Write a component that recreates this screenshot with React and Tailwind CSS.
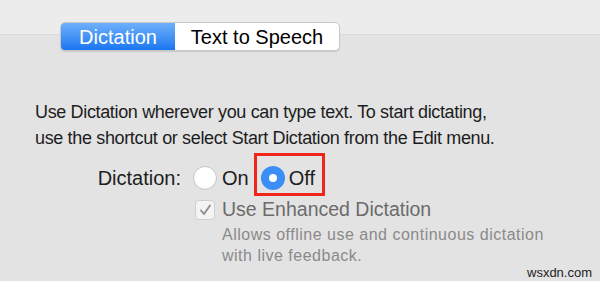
export default function App() {
  return (
    <div
      className="relative w-[600px] h-[281px] overflow-hidden bg-[#e3e3e3] text-[#1d1d1d]"
      style={{ fontFamily: '"Liberation Sans", Arial, sans-serif' }}
    >
      {/* top toolbar band */}
      <div className="h-[35px] bg-[#ececec] border-b border-[#d9d9d9]" />

      {/* segmented control overlapping the band edge */}
      <div className="absolute left-[60px] top-[22px] flex h-[29px] rounded-[5px] border border-[#c8c8c8] bg-white shadow-[0_1px_1px_rgba(0,0,0,0.12)] overflow-hidden">
        <div className="w-[114px] flex items-center justify-center bg-gradient-to-b from-[#6db0fb] to-[#1776f0] text-white text-[20px]">
          Dictation
        </div>
        <div className="w-[164px] flex items-center justify-center text-[20px] text-black">
          Text to Speech
        </div>
      </div>

      <div className="pl-[35px] pt-[64px]">
        <p className="text-[18px] leading-[26px] tracking-[-0.35px]">
          Use Dictation wherever you can type text. To start dictating,
          <br />
          use the shortcut or select Start Dictation from the Edit menu.
        </p>
      </div>

      <div className="flex items-center mt-[13px] h-[28px]">
        <span className="w-[182px] text-right text-[20px] pr-[1px]">Dictation:</span>
        <div className="flex items-center ml-[11px]">
          <span className="w-[24px] h-[24px] rounded-full bg-white border border-[#c4c4c4] shadow-[inset_0_-1px_1px_rgba(0,0,0,0.05)]" />
          <span className="ml-[5px] text-[20px]">On</span>
        </div>
        <div className="relative flex items-center ml-[12px]">
          <span className="w-[24px] h-[24px] rounded-full bg-[#3a8ef6] flex items-center justify-center">
            <span className="w-[8px] h-[8px] rounded-full bg-white" />
          </span>
          <span className="ml-[4px] text-[20px]">Off</span>
          <span className="absolute left-[-7px] top-[-10px] w-[71px] h-[43px] border-[3px] border-[#f0261b]" />
        </div>
      </div>

      <div className="ml-[195px] mt-[7px]">
        <div className="flex items-center h-[22px]">
          <span className="w-[20px] h-[20px] rounded-[4px] border border-[#cfcfcf] bg-[#f4f4f4] flex items-center justify-center">
            <svg width="13" height="12" viewBox="0 0 13 12">
              <path d="M2 6.5 L5 10 L11 1.5" fill="none" stroke="#8a8a8a" strokeWidth="1.8" strokeLinecap="round" strokeLinejoin="round" />
            </svg>
          </span>
          <span className="ml-[7px] text-[19.5px] text-[#6b6b6b]">Use Enhanced Dictation</span>
        </div>
        <p className="ml-[27px] mt-[3px] text-[16px] leading-[21px] tracking-[0.5px] text-[#8a8a8a]">
          Allows offline use and continuous dictation
          <br />
          with live feedback.
        </p>
      </div>

      <span className="absolute left-[527px] top-[263px] text-[13px] text-[#222]">wsxdn.com</span>
    </div>
  );
}
